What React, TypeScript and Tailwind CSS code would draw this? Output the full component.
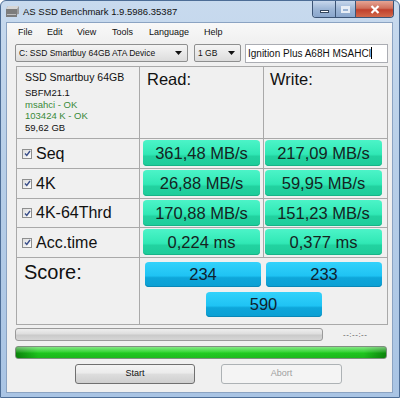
const MENU = [
    { label: 'File', w: 'w-[29px]' },
    { label: 'Edit', w: 'w-[30px]' },
    { label: 'View', w: 'w-[35px]' },
    { label: 'Tools', w: 'w-[37px]' },
    { label: 'Language', w: 'w-[55px]' },
    { label: 'Help', w: 'w-[30px]' },
]

const ROWS = [
    { label: 'Seq', read: '361,48 MB/s', write: '217,09 MB/s', h: 'h-[30px]' },
    { label: '4K', read: '26,88 MB/s', write: '59,95 MB/s', h: 'h-[30px]' },
    { label: '4K-64Thrd', read: '170,88 MB/s', write: '151,23 MB/s', h: 'h-[29px]' },
    { label: 'Acc.time', read: '0,224 ms', write: '0,377 ms', h: 'h-[30px]' },
]

const greenBox =
    'w-[117px] h-[26px] rounded-[4px] flex items-center justify-center text-[16.5px] leading-none text-[#14241f] bg-[linear-gradient(to_bottom,#4cf4c8_0%,#30e8b5_55%,#22d2a0_63%,#1ecc9a_100%)] shadow-[inset_0_-1px_0_#17b487]'

const blueBox =
    'w-[116px] h-[25px] rounded-[4px] flex items-center justify-center text-[16.5px] leading-none text-[#0f2230] bg-[linear-gradient(to_bottom,#33d2fb_0%,#1fc3f4_55%,#0ea6da_63%,#0a9fd3_100%)] shadow-[inset_0_-1px_0_#0888b8]'

function Arrow() {
    return (
        <svg width="7" height="4" viewBox="0 0 7 4">
            <path d="M0 0 L7 0 L3.5 4 Z" fill="#111" />
        </svg>
    )
}

function Check() {
    return (
        <div className="w-[10px] h-[10px] border border-[#8e8f8f] bg-[linear-gradient(135deg,#dcdcdc,#ffffff)] flex items-center justify-center">
            <svg width="7" height="7" viewBox="0 0 7 7">
                <path d="M1 3.5 L2.8 5.5 L6 1" fill="none" stroke="#3a4f8a" strokeWidth="1.4" />
            </svg>
        </div>
    )
}

export default function App() {
    return (
        <div className="w-[400px] h-[398px] flex flex-col rounded-t-[6px] border border-[#4d6d96] bg-[linear-gradient(to_bottom,#c8daee,#b8cfe8_40%,#a9c4e4)] font-['Liberation_Sans',Arial,sans-serif] overflow-hidden">
            {/* title bar */}
            <div className="h-[21px] flex items-start shrink-0">
                <svg className="ml-[4px] mt-[4px]" width="15" height="13" viewBox="0 0 15 13">
                    <path d="M3 1 L14 1 L14 9 L1 12 L1 4 Z" fill="#9a9a9a" />
                    <path d="M1 4 L12 4 L14 1 L3 1 Z" fill="#d6d6d6" />
                    <path d="M1 4 L12 4 L12 12 L1 12 Z" fill="#7c7c7c" />
                    <path d="M2 9 L11 9 L11 10 L2 10 Z" fill="#bdbdbd" />
                </svg>
                <span className="ml-[3px] mt-[6px] text-[9.5px] leading-none text-[#111]">AS SSD Benchmark 1.9.5986.35387</span>
                <div className="ml-auto mr-[5px] flex h-[17px] rounded-b-[4px] border border-t-0 border-[#3c5475] overflow-hidden">
                    <div className="w-[23px] flex items-end justify-center pb-[4px] bg-[linear-gradient(to_bottom,#c7d7ec,#9db6d6_50%,#8aa6cc)] border-r border-[#3c5475]">
                        <div className="w-[9px] h-[3px] bg-white border border-[#34465e]" />
                    </div>
                    <div className="w-[20px] flex items-center justify-center bg-[linear-gradient(to_bottom,#c7d7ec,#9db6d6_50%,#8aa6cc)] border-r border-[#3c5475]">
                        <div className="w-[9px] h-[7px] border-2 border-t-[3px] border-[#e8eef6]" />
                    </div>
                    <div className="w-[37px] flex items-center justify-center bg-[linear-gradient(to_bottom,#e6a494,#d0705c_45%,#c0402c_55%,#d2684a)]">
                        <svg width="10" height="9" viewBox="0 0 10 9">
                            <path d="M1.5 1 L8.5 8 M8.5 1 L1.5 8" stroke="#fff" strokeWidth="2.2" />
                        </svg>
                    </div>
                </div>
            </div>

            {/* client */}
            <div className="ml-[5px] w-[387px] h-[371px] bg-[#f0f0f0] border border-[#8ba3c2] flex flex-col">
                <div className="h-[20px] flex items-center pl-[11px] text-[9px] text-[#111] bg-[linear-gradient(to_bottom,#f8f8f8,#f0f0f0)]">
                    {MENU.map(m => (
                        <span key={m.label} className={m.w}>{m.label}</span>
                    ))}
                </div>

                <div className="mt-[1px] flex items-center h-[18px] pl-[8px]">
                    <div className="w-[173px] h-[18px] rounded-[2px] border border-[#8e8f8f] bg-[linear-gradient(to_bottom,#f4f4f4,#e9e9e9_50%,#dcdcdc)] flex items-center pl-[3px] pr-[5px] text-[8.5px] text-[#111]">
                        <span className="flex-1">C: SSD Smartbuy 64GB ATA Device</span>
                        <Arrow />
                    </div>
                    <div className="ml-[6px] w-[47px] h-[18px] rounded-[2px] border border-[#8e8f8f] bg-[linear-gradient(to_bottom,#f4f4f4,#e9e9e9_50%,#dcdcdc)] flex items-center pl-[3px] pr-[5px] text-[8.5px] text-[#111]">
                        <span className="flex-1">1 GB</span>
                        <Arrow />
                    </div>
                    <div className="ml-[4px] w-[143px] h-[19px] border border-[#abadb3] bg-white flex items-center pl-[2px] text-[10px] text-[#111]">
                        <span>Ignition Plus A68H MSAHCI</span>
                        <span className="w-[1px] h-[12px] bg-black" />
                    </div>
                </div>

                {/* result grid */}
                <div className="mt-[4px] ml-[9px] w-[372px] border border-[#a9a9a9] flex flex-col">
                    <div className="h-[71px] flex">
                        <div className="w-[123px] border-r border-[#a9a9a9] pl-[8px] pt-[4px] text-[#111]">
                            <div className="text-[10.5px] leading-[12px]">SSD Smartbuy 64GB</div>
                            <div className="mt-[4px] text-[9.5px] leading-[11.7px]">
                                <div>SBFM21.1</div>
                                <div className="text-[#3a8a3a]">msahci - OK</div>
                                <div className="text-[#3a8a3a]">103424 K - OK</div>
                                <div>59,62 GB</div>
                            </div>
                        </div>
                        <div className="w-[124px] border-r border-[#a9a9a9] pl-[7px] pt-[4px] text-[16.5px] leading-none text-[#111]">Read:</div>
                        <div className="flex-1 pl-[6px] pt-[4px] text-[16.5px] leading-none text-[#111]">Write:</div>
                    </div>

                    {ROWS.map(r => (
                        <div key={r.label} className={`${r.h} flex border-t border-[#a9a9a9]`}>
                            <div className="w-[123px] border-r border-[#a9a9a9] flex items-center pl-[5px] gap-[4px]">
                                <Check />
                                <span className="text-[16px] leading-none text-[#111]">{r.label}</span>
                            </div>
                            <div className="w-[124px] border-r border-[#a9a9a9] pl-[3px] pt-[1px]">
                                <div className={greenBox}>{r.read}</div>
                            </div>
                            <div className="flex-1 pl-[1px] pt-[1px]">
                                <div className={greenBox}>{r.write}</div>
                            </div>
                        </div>
                    ))}

                    <div className="h-[67px] flex border-t border-[#a9a9a9]">
                        <div className="w-[123px] border-r border-[#a9a9a9] pl-[7px] pt-[4px] text-[20px] leading-none text-[#111]">Score:</div>
                        <div className="flex-1 flex flex-col items-center pt-[4px]">
                            <div className="flex gap-[5px]">
                                <div className={blueBox}>234</div>
                                <div className={blueBox}>233</div>
                            </div>
                            <div className={`${blueBox} mt-[5px]`}>590</div>
                        </div>
                    </div>
                </div>

                <div className="mt-[3px] ml-[8px] flex items-center">
                    <div className="w-[308px] h-[13px] rounded-[3px] border border-[#9a9a9a] bg-[linear-gradient(to_bottom,#eeeeee,#dedede_45%,#cacaca_55%,#d6d6d6)]" />
                    <span className="ml-[20px] text-[8px] text-[#555] tracking-[0.5px]">--:--:--</span>
                </div>

                <div className="mt-[5px] ml-[8px] w-[372px] h-[13px] rounded-[3px] border border-[#7f8f7f] bg-[linear-gradient(to_right,#0d8f0d,#1fcf1f_6%,#24d624_50%,#1fcf1f_94%,#0d8f0d)] overflow-hidden">
                    <div className="h-full bg-[linear-gradient(to_bottom,rgba(255,255,255,0.45),rgba(255,255,255,0.1)_45%,rgba(0,0,0,0.05)_55%,rgba(0,0,0,0.12))]" />
                </div>

                <div className="mt-[5px] ml-[68px] flex items-center">
                    <div className="w-[120px] h-[20px] rounded-[3px] border border-[#707070] bg-[linear-gradient(to_bottom,#f4f4f4,#ebebeb_45%,#dddddd_50%,#cfcfcf)] flex items-center justify-center text-[9px] text-[#111]">Start</div>
                    <div className="ml-[26px] w-[121px] h-[20px] rounded-[3px] border border-[#adb2b5] bg-[#f4f4f4] flex items-center justify-center text-[9px] text-[#a0a0a0]">Abort</div>
                </div>
            </div>
        </div>
    )
}
